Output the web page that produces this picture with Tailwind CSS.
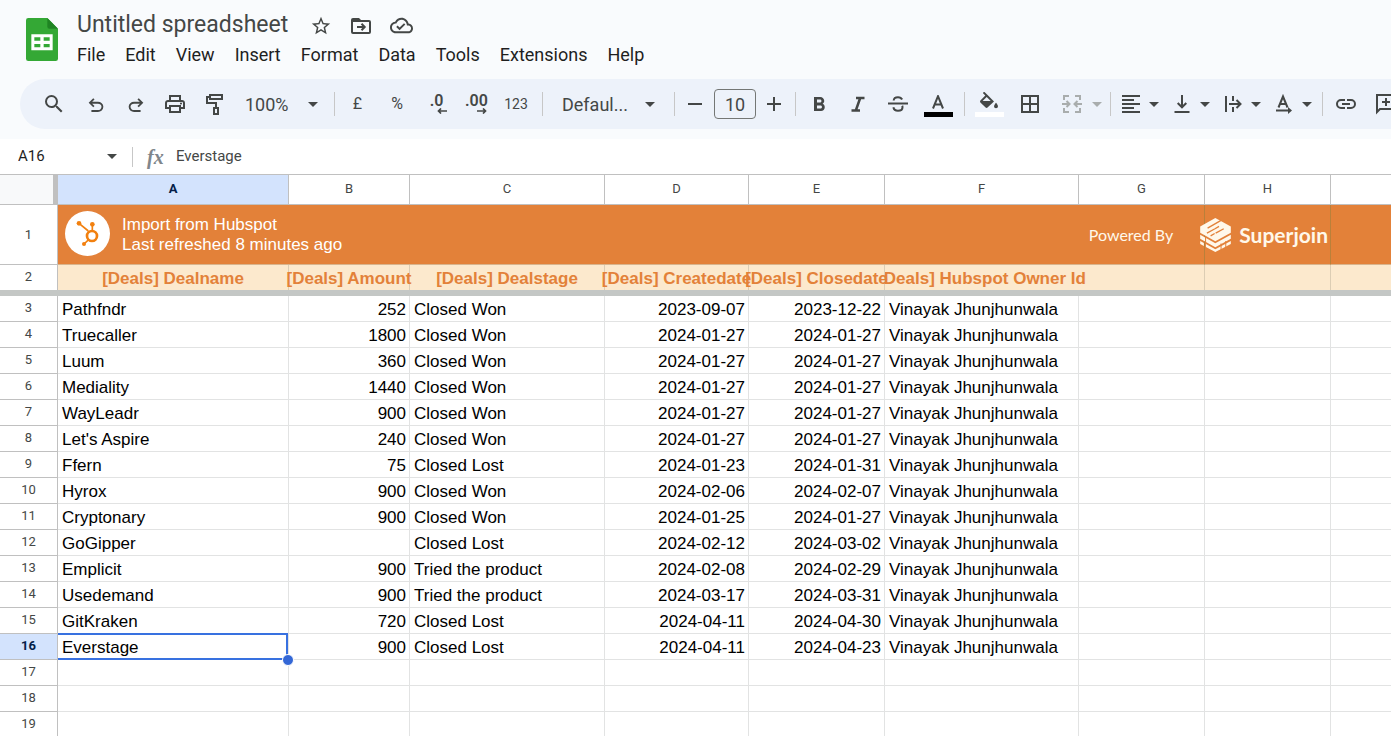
<!DOCTYPE html>
<html lang="en">
<head>
<meta charset="utf-8">
<title>Untitled spreadsheet</title>
<script src="https://cdn.jsdelivr.net/npm/@tailwindcss/browser@4"></script>
</head>
<body class="flex h-screen flex-col overflow-hidden bg-[#f9fbfd] font-[Roboto,sans-serif] text-[#444746]">
<svg class="hidden">
  <symbol id="caret" viewBox="0 0 10 5"><path d="M0 0h10L5 5z" fill="currentColor"/></symbol>
</svg>

<header class="shrink-0">
  <div class="flex pt-2">
    <a href="#" aria-label="Sheets home" class="mt-[10px] ml-[26px] h-[43px] w-8 shrink-0">
      <svg viewBox="0 0 96 129" class="h-[43px] w-8">
        <path d="M7 0H64L96 32V122a7 7 0 0 1-7 7H7a7 7 0 0 1-7-7V7A7 7 0 0 1 7 0z" fill="#34a835"/>
        <path d="M64 0L96 32H70a6 6 0 0 1-6-6z" fill="#1f8423"/>
        <path d="M16 49H80V97H16zM25 58v10h18V58zM53 58v10h18V58zM25 78v10h18V78zM53 78v10h18V78z" fill="#fff" fill-rule="evenodd"/>
      </svg>
    </a>
    <div class="ml-[19px]">
      <div class="flex h-8 items-center">
        <input aria-label="Document title" value="Untitled spreadsheet" class="w-[232px] bg-transparent pt-[3px] text-[23px] outline-none">
        <div class="flex items-center gap-4 pt-[3px]">
          <button aria-label="Star" class="flex w-6 justify-center"><svg viewBox="0 0 24 24" class="size-[22px]" fill="currentColor"><path d="M22 9.24l-7.19-.62L12 2 9.19 8.63 2 9.24l5.46 4.73L5.82 21 12 17.27 18.18 21l-1.63-7.03L22 9.24zM12 15.4l-3.76 2.27 1-4.28-3.32-2.88 4.38-.38L12 6.1l1.71 4.04 4.38.38-3.32 2.88 1 4.28L12 15.4z"/></svg></button>
          <button aria-label="Move" class="flex w-6 justify-center"><svg viewBox="0 0 24 24" class="size-6" fill="none" stroke="currentColor" stroke-width="2"><path d="M3 6.500V18a1 1 0 0 0 1 1h16a1 1 0 0 0 1-1V8a1 1 0 0 0-1-1h-8"/><path d="M2 8V6a2 2 0 0 1 2-2h6l2.500 2.500V8z" fill="currentColor" stroke="none"/><path d="M8 13h7M12.500 9.800l3.200 3.200-3.200 3.200"/></svg></button>
          <button aria-label="Saved to Drive" class="flex w-6 justify-center"><svg viewBox="0 0 24 24" class="size-[23px]" fill="currentColor"><path d="M19.35 10.04C18.67 6.59 15.64 4 12 4 9.11 4 6.6 5.64 5.35 8.04 2.34 8.36 0 10.91 0 14c0 3.31 2.69 6 6 6h13c2.76 0 5-2.24 5-5 0-2.64-2.05-4.78-4.65-4.96zM19 18H6c-2.21 0-4-1.79-4-4 0-2.05 1.53-3.76 3.56-3.97l1.07-.11.5-.95C8.08 7.14 9.94 6 12 6c2.62 0 4.88 1.86 5.39 4.43l.3 1.5 1.53.11c1.56.1 2.78 1.41 2.78 2.96 0 1.65-1.35 3-3 3zm-9-3.82l-2.09-2.09L6.5 13.5 10 17l6.01-6.01-1.41-1.41z"/></svg></button>
        </div>
      </div>
      <nav class="flex h-[30px] items-center gap-5 pb-[2px] text-[18px] text-[#1f1f1f]">
        <button>File</button><button>Edit</button><button>View</button><button>Insert</button><button>Format</button><button>Data</button><button>Tools</button><button>Extensions</button><button>Help</button>
      </nav>
    </div>
  </div>

  <div role="toolbar" aria-label="Main" class="mt-[9px] mb-[10px] ml-5 flex h-[50px] items-center overflow-hidden rounded-l-full bg-[#edf2fa] pl-[14px] *:shrink-0">
    <button aria-label="Search" class="flex w-10 justify-center"><svg viewBox="0 0 24 24" class="size-6" fill="currentColor"><path d="M15.5 14h-.79l-.28-.27A6.471 6.471 0 0 0 16 9.500 6.500 6.500 0 1 0 9.500 16c1.61 0 3.09-.59 4.23-1.57l.27.28v.79l5 4.99L20.490 19l-4.990-5zm-6 0C7.010 14 5 11.990 5 9.500S7.010 5 9.500 5 14 7.010 14 9.500 11.990 14 9.500 14z"/></svg></button>
    <button aria-label="Undo" class="ml-[2px] flex w-10 justify-center pt-px"><svg viewBox="0 -980 960 960" class="size-[22px]" fill="currentColor"><path d="M280-200v-80h284q63 0 109.500-40T720-420q0-60-46.500-100T564-560H312l104 104-56 56-200-200 200-200 56 56-104 104h252q97 0 166.500 63T800-420q0 94-69.500 157T564-200H280Z"/></svg></button>
    <button aria-label="Redo" class="flex w-[39px] justify-center pt-px"><svg viewBox="0 -980 960 960" class="size-[22px]" fill="currentColor"><path transform="matrix(-1 0 0 1 960 0)" d="M280-200v-80h284q63 0 109.500-40T720-420q0-60-46.500-100T564-560H312l104 104-56 56-200-200 200-200 56 56-104 104h252q97 0 166.500 63T800-420q0 94-69.500 157T564-200H280Z"/></svg></button>
    <button aria-label="Print" class="flex w-10 justify-center"><svg viewBox="0 -960 960 960" class="size-6" fill="currentColor"><path d="M640-640v-120H320v120h-80v-200h480v200h-80Zm80 180q17 0 28.500-11.500T760-500q0-17-11.500-28.500T720-540q-17 0-28.500 11.500T680-500q0 17 11.500 28.500T720-460Zm-80 260v-160H320v160h320Zm80 80H240v-160H80v-240q0-51 35-85.500t85-34.500h560q51 0 85.500 34.500T880-520v240H720v160Zm80-240v-160q0-17-11.500-28.500T760-560H200q-17 0-28.500 11.500T160-520v160h80v-80h480v80h80Z"/></svg></button>
    <button aria-label="Paint format" class="flex w-[39px] justify-center"><svg viewBox="0 0 24 24" class="size-6" fill="none" stroke="currentColor" stroke-width="2"><path d="M7 3h12v4H7zM7 5H4v6h9v5M11 16h4v6h-4z"/></svg></button>
    <button class="flex w-[100px] items-center pl-[11px] text-[18px]">100%<svg class="ml-[19px] h-[5px] w-[10px]"><use href="#caret"/></svg></button>
    <span class="h-6 w-px bg-[#c7c7c7]"></span>
    <button aria-label="Format as currency" class="ml-[3px] w-[39px] text-[16px]">£</button>
    <button aria-label="Format as percent" class="w-10 text-[16px]">%</button>
    <button aria-label="Decrease decimal places" class="flex w-[39px] flex-col items-center text-[16px] leading-[14px] font-semibold"><span class="flex w-5 flex-col">.0<svg viewBox="0 0 10 6" class="h-[6px] w-[10px] self-end" fill="none" stroke="currentColor" stroke-width="1.700"><path d="M10 3H1.500M4 .500L1.500 3 4 5.500"/></svg></span></button>
    <button aria-label="Increase decimal places" class="flex w-10 flex-col items-center text-[16px] leading-[14px] font-semibold"><span class="flex w-[22px] flex-col">.00<svg viewBox="0 0 10 6" class="h-[6px] w-[10px] self-end" fill="none" stroke="currentColor" stroke-width="1.700"><path d="M0 3H8.500M6 .500L8.500 3 6 5.500"/></svg></span></button>
    <button aria-label="More formats" class="w-10 text-[14px]">123</button>
    <span class="ml-[6px] h-6 w-px bg-[#c7c7c7]"></span>
    <button aria-label="Font" class="flex w-[131px] items-center pl-[19px] text-[18px]">Defaul...<svg class="ml-[17px] h-[5px] w-[10px]"><use href="#caret"/></svg></button>
    <span class="h-6 w-px bg-[#c7c7c7]"></span>
    <button aria-label="Decrease font size" class="flex w-[39px] justify-center"><svg viewBox="0 0 14 14" class="size-[14px]" stroke="currentColor" stroke-width="2"><path d="M0 7h14"/></svg></button>
    <input aria-label="Font size" value="10" class="h-[30px] w-[42px] rounded-[4px] border border-[#747775] bg-transparent text-center text-[18px] outline-none">
    <button aria-label="Increase font size" class="flex w-[35px] justify-center"><svg viewBox="0 0 14 14" class="size-[14px]" stroke="currentColor" stroke-width="2"><path d="M0 7h14M7 0v14"/></svg></button>
    <span class="ml-1 h-6 w-px bg-[#c7c7c7]"></span>
    <button aria-label="Bold" class="ml-[3px] flex w-[39px] justify-center"><svg viewBox="0 0 24 24" class="size-6" fill="currentColor"><path d="M15.600 11.790c.97-.67 1.650-1.770 1.650-2.790 0-2.260-1.750-4-4-4H7v14h7.040c2.090 0 3.710-1.700 3.710-3.790 0-1.520-.860-2.820-2.150-3.420zM10 7.500h3c.830 0 1.500.67 1.500 1.500s-.67 1.500-1.500 1.500h-3v-3zm3.500 9H10v-3h3.500c.830 0 1.500.67 1.500 1.500s-.67 1.500-1.500 1.500z"/></svg></button>
    <button aria-label="Italic" class="flex w-10 justify-center"><svg viewBox="0 0 24 24" class="size-6" fill="none" stroke="currentColor" stroke-width="2.500"><path d="M10 6h8.500M5.500 18.500H14M14.200 6l-4.400 12.500"/></svg></button>
    <button aria-label="Strikethrough" class="flex w-10 justify-center"><svg viewBox="0 0 24 24" class="size-6" fill="none" stroke="currentColor" stroke-width="2"><path d="M2 11.500h20M7.700 8.500C7.800 6.500 9.600 5.200 12 5.200c2 0 3.500.900 4.100 2.300M7.400 15.200c.400 2.200 2.100 3.500 4.600 3.500 2.600 0 4.500-1.400 4.500-3.500 0-.600-.1-1-.3-1.400"/></svg></button>
    <button aria-label="Text color" class="flex w-10 flex-col items-center gap-[3px] pt-[3px]"><svg viewBox="0 0 14 14" class="size-[14px]" fill="none" stroke="currentColor" stroke-width="2"><path d="M2 13.500L7 1.200l5 12.300M3.800 9.500h6.400"/></svg><span class="h-[5px] w-[29px] bg-black"></span></button>
    <span class="ml-[6px] h-6 w-px bg-[#c7c7c7]"></span>
    <button aria-label="Fill color" class="ml-1 flex w-10 flex-col items-center"><svg viewBox="0 0 20 20" class="size-5" fill="currentColor"><path d="M15 9.500L8.600 3.100 5.200-.3 3.800 1.100 6.300 3.600 1.400 8.500c-.5.500-.5 1.400 0 1.900l5.200 5.200c.5.500 1.400.5 1.900 0L15 9.500zM7.700 5l4 4H3.600L7.700 5zM17 10.800s-2 2.200-2 3.500a2 2 0 0 0 4 0c0-1.300-2-3.500-2-3.500z"/></svg><span class="h-[5px] w-[29px] bg-white"></span></button>
    <button aria-label="Borders" class="ml-px flex w-10 justify-center"><svg viewBox="0 0 24 24" class="size-6" fill="none" stroke="currentColor" stroke-width="2"><path d="M4 4h16v16H4zM12 4v16M4 12h16"/></svg></button>
    <button aria-label="Merge cells" disabled class="flex w-[60px] items-center pl-[10px] text-[#a9adad]"><svg viewBox="0 0 24 24" class="size-6" fill="none" stroke="currentColor" stroke-width="2"><path d="M9 4H4v4M15 4h5v4M9 20H4v-4M15 20h5v-4M2 12h7M6.500 9L9.500 12l-3 3M22 12h-7M17.500 9l-3 3 3 3"/></svg><svg class="ml-[8px] h-[5px] w-[10px]"><use href="#caret"/></svg></button>
    <span class="h-6 w-px bg-[#c7c7c7]"></span>
    <button aria-label="Horizontal align" class="flex w-[51px] items-center gap-[6px] pl-2"><svg viewBox="0 0 24 24" class="size-6" stroke="currentColor" stroke-width="2"><path d="M3 4h18M3 8h12M3 12h18M3 16h12M3 20h18"/></svg><svg class="h-[5px] w-[10px]"><use href="#caret"/></svg></button>
    <button aria-label="Vertical align" class="flex w-[51px] items-center gap-[6px] pl-2"><svg viewBox="0 0 24 24" class="size-6" fill="none" stroke="currentColor" stroke-width="2"><path d="M4.500 20h15M12 3v12M7.700 11l4.300 4.300 4.300-4.300"/></svg><svg class="h-[5px] w-[10px]"><use href="#caret"/></svg></button>
    <button aria-label="Text wrapping" class="flex w-[51px] items-center gap-[6px] pl-2"><svg viewBox="0 0 24 24" class="size-6" fill="none" stroke="currentColor" stroke-width="2"><path d="M5 4v16M12 4v5M12 15v5M8 12h11M15.500 8l4 4-4 4"/></svg><svg class="h-[5px] w-[10px]"><use href="#caret"/></svg></button>
    <button aria-label="Text rotation" class="flex w-[51px] items-center gap-[6px] pl-2"><svg viewBox="0 0 24 24" class="size-6" fill="none" stroke="currentColor" stroke-width="2"><path d="M6.500 15.500L11 4.500l4.500 11M8 12h6M4 18.500h13"/><path d="M16 15l4 3.500-4 3.500z" fill="currentColor" stroke="none"/></svg><svg class="h-[5px] w-[10px]"><use href="#caret"/></svg></button>
    <span class="ml-[7px] h-6 w-px bg-[#c7c7c7]"></span>
    <button aria-label="Insert link" class="ml-[3px] flex w-10 justify-center"><svg viewBox="0 0 24 24" class="size-6" fill="none" stroke="currentColor" stroke-width="2"><path d="M11 8H7a4 4 0 0 0 0 8h4M13 8h4a4 4 0 0 1 0 8h-4M8 12h8"/></svg></button>
    <button aria-label="Insert comment" class="flex w-10 justify-center"><svg viewBox="0 0 24 24" class="size-6" fill="none" stroke="currentColor" stroke-width="2"><path d="M3 20V3h18v14H6zM12 6v8M8 10h8"/></svg></button>
  </div>
</header>

<div class="flex h-[35px] shrink-0 items-center bg-white">
  <input aria-label="Name box" value="A16" class="ml-[18px] w-[89px] bg-transparent text-[15px] text-[#1f1f1f] outline-none">
  <button aria-label="Named ranges"><svg class="h-[5px] w-[10px]"><use href="#caret"/></svg></button>
  <span class="ml-[15px] h-5 w-px bg-[#c7c7c7]"></span>
  <label for="formula" class="ml-[14px] w-[29px] font-[Liberation_Serif,serif] text-[20px] leading-5 font-bold text-[#80868b] italic">fx</label>
  <input id="formula" value="Everstage" class="min-w-0 flex-1 bg-transparent text-[15px] outline-none">
</div>

<main class="min-h-0 flex-1 overflow-hidden bg-white">
  <table class="w-full table-fixed border-separate border-spacing-0 font-[Liberation_Sans,Arial,sans-serif] text-[17px] leading-5 whitespace-nowrap text-black">
    <colgroup>
      <col class="w-[58px]"><col class="w-[231px]"><col class="w-[121px]"><col class="w-[195px]"><col class="w-[144px]"><col class="w-[136px]"><col class="w-[194px]"><col class="w-[126px]"><col class="w-[126px]"><col>
    </colgroup>
    <thead class="font-[Roboto,sans-serif] text-[13px] text-[#444746]">
      <tr class="h-[31px] *:border-y *:border-[#c0c0c0] *:px-0 *:pt-0 *:pb-[2px] *:font-normal">
        <td class="border-r-[5px] bg-[#f8f9fa]"></td>
        <th scope="col" class="border-r bg-[#d3e3fd]"><span class="font-bold text-[#041e49]">A</span></th>
        <th scope="col" class="border-r">B</th><th scope="col" class="border-r">C</th><th scope="col" class="border-r">D</th><th scope="col" class="border-r">E</th><th scope="col" class="border-r">F</th><th scope="col" class="border-r">G</th><th scope="col" class="border-r">H</th><td></td>
      </tr>
    </thead>
    <tbody id="rows">
      <tr class="h-[60px] *:p-0">
        <th scope="row" class="border-r border-b border-[#c0c0c0] font-[Roboto,sans-serif] text-[13px] font-normal text-[#444746]">1</th>
        <td colspan="7" class="border-r border-b border-r-[#b9803a] border-b-[#d9b48c] bg-[#e38139]">
          <div class="flex items-center gap-3 pb-[2px] pl-[7px] text-white">
            <svg viewBox="0 0 135 135" class="size-[45px]" role="img" aria-label="HubSpot"><circle cx="67.500" cy="67.500" r="67.500" fill="#fff"/><g fill="none" stroke="#f2800f" stroke-width="5"><circle cx="81" cy="75" r="15" stroke-width="8"/><path d="M42 37l28 23M82 40v20M57 99l14-13"/></g><g fill="#f2800f"><circle cx="42" cy="37" r="7"/><circle cx="82" cy="40" r="7"/><circle cx="57" cy="99" r="6"/></g></svg>
            <p class="pt-[2px]">Import from Hubspot<br>Last refreshed 8 minutes ago</p>
          </div>
        </td>
        <td class="relative border-r border-b border-r-[#b9803a] border-b-[#d9b48c] bg-[#e38139]">
          <div class="absolute top-0 right-[2px] flex h-[60px] items-center font-[Lato,sans-serif] text-[#fff8ea]">
            <span class="text-[16px]">Powered By</span>
            <svg viewBox="0 0 91 101" class="mr-2 ml-[27px] h-[34px] w-[31px]" fill="currentColor"><path d="M0 25L45 0l46 25v19L45 69 0 44z"/><path d="M0 50l45 25 46-25v12L45 87 0 62zM17 77l28 16 46-25v9L45 101 17 86zM0 68l11 6v9L0 77z"/><path d="M62 7L22 30M70 32L46 45M44 32L20 45M31 53l12-7M44 32l12-7" stroke="#e38139" stroke-width="4"/><path d="M16 55v18M62 76v20M76 68v20" stroke="#e38139" stroke-width="3"/></svg>
            <span class="text-[21px] font-bold">Superjoin</span>
          </div>
        </td>
        <td class="border-b border-[#d9b48c] bg-[#e38139]"></td>
      </tr>
      <tr class="h-[25px] *:p-0">
        <th scope="row" class="border-r border-[#c0c0c0] font-[Roboto,sans-serif] text-[13px] font-normal text-[#444746]"><div class="pb-[2px]">2</div></th>
        <th scope="col" class="border-r border-[#dccdb4] bg-[#fce9cd] text-[#e38139]"><div class="flex justify-center pt-[2px]">[Deals] Dealname</div></th>
        <th scope="col" class="border-r border-[#dccdb4] bg-[#fce9cd] text-[#e38139]"><div class="flex justify-center pt-[2px]">[Deals] Amount</div></th>
        <th scope="col" class="border-r border-[#dccdb4] bg-[#fce9cd] text-[#e38139]"><div class="flex justify-center pt-[2px]">[Deals] Dealstage</div></th>
        <th scope="col" class="border-r border-[#dccdb4] bg-[#fce9cd] text-[#e38139]"><div class="flex justify-center pt-[2px]">[Deals] Createdate</div></th>
        <th scope="col" class="border-r border-[#dccdb4] bg-[#fce9cd] text-[#e38139]"><div class="flex justify-center pt-[2px]">[Deals] Closedate</div></th>
        <th scope="col" class="bg-[#fce9cd] text-[#e38139]"><div class="relative flex justify-center pt-[2px] [clip-path:inset(0_-20px_0_0)]">[Deals] Hubspot Owner Id</div></th>
        <td class="border-r border-[#dccdb4] bg-[#fce9cd]"></td>
        <td class="border-r border-[#dccdb4] bg-[#fce9cd]"></td>
        <td class="bg-[#fce9cd]"></td>
      </tr>
      <tr class="h-[6px]"><td colspan="10" class="bg-[#c4c7c5] p-0"></td></tr>
    </tbody>
  </table>
</main>

<script>
const deals = [
  ["Pathfndr", "252", "Closed Won", "2023-09-07", "2023-12-22"],
  ["Truecaller", "1800", "Closed Won", "2024-01-27", "2024-01-27"],
  ["Luum", "360", "Closed Won", "2024-01-27", "2024-01-27"],
  ["Mediality", "1440", "Closed Won", "2024-01-27", "2024-01-27"],
  ["WayLeadr", "900", "Closed Won", "2024-01-27", "2024-01-27"],
  ["Let's Aspire", "240", "Closed Won", "2024-01-27", "2024-01-27"],
  ["Ffern", "75", "Closed Lost", "2024-01-23", "2024-01-31"],
  ["Hyrox", "900", "Closed Won", "2024-02-06", "2024-02-07"],
  ["Cryptonary", "900", "Closed Won", "2024-01-25", "2024-01-27"],
  ["GoGipper", "", "Closed Lost", "2024-02-12", "2024-03-02"],
  ["Emplicit", "900", "Tried the product", "2024-02-08", "2024-02-29"],
  ["Usedemand", "900", "Tried the product", "2024-03-17", "2024-03-31"],
  ["GitKraken", "720", "Closed Lost", "2024-04-11", "2024-04-30"],
  ["Everstage", "900", "Closed Lost", "2024-04-11", "2024-04-23"],
  [], [], [],
];
const left = "border-r border-b border-[#e2e3e3] pt-[2px] pr-0 pb-0 pl-1 text-left";
const right = "border-r border-b border-[#e2e3e3] pt-[2px] pr-[3px] pb-0 pl-0 text-right";
const last = "border-b border-[#e2e3e3] p-0";
const rowHead = "border-r border-b border-[#c0c0c0] px-0 pt-0 pb-[2px] font-[Roboto,sans-serif] text-[13px] font-normal text-[#444746]";
const rowHeadActive = "border-r border-b border-[#c0c0c0] bg-[#d3e3fd] px-0 pt-0 pb-[2px] font-[Roboto,sans-serif] text-[13px] font-bold text-[#041e49]";
const selection = '<span class="absolute -top-px right-0 -bottom-px left-0 border-y-2 border-r-2 border-[#3871e0]"></span><span class="absolute -right-[6px] -bottom-[7px] z-10 size-3 rounded-full border border-white bg-[#3367d6]"></span>';
document.getElementById("rows").insertAdjacentHTML("beforeend", deals.map((d, i) => {
  const n = i + 3, active = n === 16;
  const owner = d.length ? "Vinayak Jhunjhunwala" : "";
  const cells = [d[0], d[1], d[2], d[3], d[4], owner, "", "", ""].map((v, c) => {
    const cls = c === 8 ? last : c === 1 || c === 3 || c === 4 ? right : left;
    return active && c === 0
      ? `<td class="relative ${cls}">${v}${selection}</td>`
      : `<td class="${cls}">${v || ""}</td>`;
  }).join("");
  return `<tr class="h-[26px]"><th scope="row" class="${active ? rowHeadActive : rowHead}">${n}</th>${cells}</tr>`;
}).join(""));
</script>
</body>
</html>
